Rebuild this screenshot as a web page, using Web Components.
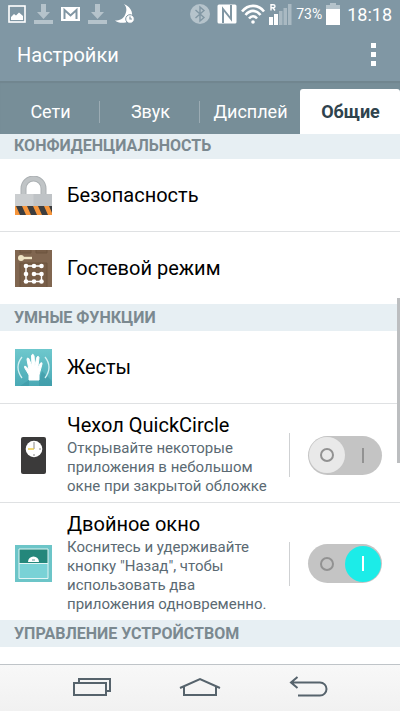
<!DOCTYPE html>
<html lang="ru">
<head>
<meta charset="utf-8">
<meta name="viewport" content="width=device-width, initial-scale=1">
<title>Настройки</title>
<style>
html, body { margin: 0; }
body { font-family: Roboto, "Noto Sans", sans-serif; color: #000; background: #fff; }
</style>
</head>
<body>
<settings-app></settings-app>

<template id="t-status">
<style>
:host { display: flex; align-items: center; justify-content: space-between; height: 28px; padding: 0 8px; color: #fff; }
div { display: flex; align-items: center; gap: 8px; }
.right { gap: 4px; }
svg { display: block; flex: none; }
.pct { font-size: 14px; }
.time { font-size: 18px; margin-left: 3px; }
.bt { margin-right: 3px; }
</style>
<div>
  <svg width="18" height="20" viewBox="0 0 18 20"><rect x="1" y="2" width="16" height="16" fill="none" stroke="#fff" stroke-width="1.6"/><path d="M3 16V13L6 10L8 11.500L11 8.500L15 12V16Z" fill="#fff"/></svg>
  <svg width="19" height="20" viewBox="0 0 19 20" fill="#b5c3cb"><path d="M7 0h5v8h4l-6.500 7L3 8h4zM0 16h19v4H0z"/></svg>
  <svg width="19" height="20" viewBox="0 0 19 20"><rect x="0" y="3" width="19" height="14" fill="#fff"/><path d="M3.500 15V6L9.500 11.500L15.500 6V15" fill="none" stroke="#8096a3" stroke-width="2"/></svg>
  <svg width="19" height="20" viewBox="0 0 19 20" fill="#b5c3cb"><path d="M7 0h5v8h4l-6.500 7L3 8h4zM0 16h19v4H0z"/></svg>
  <svg width="20" height="20" viewBox="0 0 20 20"><path d="M9 0C17 3 20 12 14 17C9 20 3 19 0 16.500C5 16.500 8 15 10 11C12 7 12 3 9 0Z" fill="#fff"/><circle cx="15" cy="15" r="4.300" fill="#fff" stroke="#8096a3"/><path d="M15 12.500V15H17" fill="none" stroke="#8096a3" stroke-width="1.200"/></svg>
</div>
<div class="right">
  <svg class="bt" width="20" height="20" viewBox="0 0 20 20"><circle cx="10" cy="10" r="10" fill="#b5c3cb"/><path d="M5.500 6L14 13.500L10 17V3L14 6.500L5.500 14" fill="none" stroke="#8096a3" stroke-width="1.400"/></svg>
  <svg width="20" height="20" viewBox="0 0 20 20"><rect x="0.500" y="0.500" width="19" height="19" rx="1.500" fill="#fff"/><path d="M6 19V5L14 15V1" fill="none" stroke="#8096a3" stroke-width="2"/></svg>
  <svg width="24" height="20" viewBox="0 0 24 20" fill="none" stroke="#fff" stroke-width="2.600"><path d="M1 7.500C7 0 17 0 23 7.500M4.500 11C9 5.500 15 5.500 19.500 11M8 14.500C10.500 11.500 13.500 11.500 16 14.500"/><circle cx="12" cy="18" r="1.800" fill="#fff" stroke="none"/></svg>
  <svg width="23" height="22" viewBox="0 0 23 22"><path d="M0 14h4v8H0zM5 11h4v11H5z" fill="#fff"/><path d="M10 8h3.500v14H10zM14.500 5H18v17h-3.500zM19 1h3.500v21H19z" fill="#a9b9c2"/><path d="M2 7.500V1.800H4.200Q6 1.800 6 3.300T4.200 4.800H2M4 4.800L6 7.500" fill="none" stroke="#fff" stroke-width="1.400"/></svg>
  <span class="pct">73%</span>
  <svg width="14" height="22" viewBox="0 0 14 22"><path d="M4 0h6v2h4v4H0V2h4z" fill="#b5c3cb"/><path d="M0 6h14v16H0z" fill="#fff"/></svg>
  <span class="time">18:18</span>
</div>
</template>

<template id="t-title">
<style>
:host { display: flex; align-items: center; justify-content: space-between; height: 53px; padding: 0 18px 0 17px; color: #fff; }
h1 { margin: 0; font-size: 20px; font-weight: 400; line-height: 24px; }
button { border: 0; padding: 5px; background: none; }
svg { display: block; }
</style>
<h1><slot></slot></h1>
<button aria-label="Меню"><svg width="6" height="24" viewBox="0 0 6 24" fill="#fff"><path d="M0 0h5v5H0zM0 9h5v5H0zM0 18h5v5H0z"/></svg></button>
</template>

<template id="t-tabs">
<style>
:host { display: block; background: #778e98; box-shadow: inset 0 2px 1px #71868f; }
nav { display: grid; grid-template-columns: repeat(4, 1fr); height: 53px; }
button { display: flex; align-items: center; justify-content: center; border: 0; margin: 8px 0 0; padding: 0 0 0 1px; background: none; font: 400 18px/22px Roboto, sans-serif; color: #fff; border-radius: 3px 3px 0 0; }
button.line { background: linear-gradient(#9babb3, #9babb3) right center / 1px 22px no-repeat; }
button[aria-selected="true"] { background: #fff; color: #2f434d; font-weight: 700; }
</style>
<nav role="tablist">
  <button role="tab" class="line" aria-selected="false">Сети</button>
  <button role="tab" class="line" aria-selected="false">Звук</button>
  <button role="tab" aria-selected="false">Дисплей</button>
  <button role="tab" aria-selected="true">Общие</button>
</nav>
</template>

<template id="t-heading">
<style>
:host { display: block; background: #e7eff3; color: #7b8990; padding: 0 14px; }
h2 { margin: 0; font-size: 16px; line-height: 27px; font-weight: 700; }
</style>
<h2><slot></slot></h2>
</template>

<template id="t-link">
<style>
:host { display: block; }
:host([divided]) { border-bottom: 1px solid #dfe1e3; }
a { display: flex; align-items: center; gap: 15px; min-height: 72px; padding: 0 15px; color: #000; text-decoration: none; font-size: 20px; line-height: 24px; }
</style>
<a href="#"><slot name="icon"></slot><slot></slot></a>
</template>

<template id="t-switch">
<style>
:host { display: block; }
:host([divided]) { border-bottom: 1px solid #dfe1e3; }
label { display: flex; align-items: center; gap: 15px; padding: 10px 18px 6px 15px; }
.text { flex: 1; font-size: 15px; line-height: 19px; color: #5b6a73; }
.name { font-size: 20px; line-height: 22px; color: #000; margin-bottom: 3px; }
.control { border-left: 1px solid #cfd1d3; height: 44px; padding-left: 18px; display: flex; align-items: center; }
.track { display: grid; grid-template-columns: 1fr 1fr; width: 74px; height: 39px; box-sizing: border-box; padding: 0 1px; border-radius: 20px; background: #c4c4c4; align-items: center; justify-items: center; }
.track > * { grid-row: 1; }
input { appearance: none; margin: 0; width: 36px; height: 36px; border-radius: 50%; background: #e9e9e9; grid-column: 1; }
input:checked { grid-column: 2; background: #1cece8; }
.off { grid-column: 1; width: 10px; height: 10px; border: 2px solid #929292; border-radius: 50%; z-index: 1; }
.on { grid-column: 2; width: 2px; height: 15px; background: #929292; z-index: 1; }
input:checked ~ .on { background: #fff; }
</style>
<label>
  <slot name="icon"></slot>
  <div class="text"><div class="name"><slot name="name"></slot></div><slot></slot></div>
  <span class="control"><span class="track"><input type="checkbox" role="switch"><span class="off"></span><span class="on"></span></span></span>
</label>
</template>

<template id="t-nav">
<style>
:host { display: block; background: linear-gradient(#f8f8f8, #f1f1f1); border-top: 1px solid #bfc4c8; }
nav { display: flex; justify-content: center; gap: 66px; height: 46px; align-items: center; }
button { border: 0; padding: 0; background: none; }
svg { display: block; fill: none; stroke: #56636c; stroke-width: 2; }
</style>
<nav>
  <button aria-label="Недавние"><svg width="42" height="24" viewBox="0 0 42 24"><path d="M4 7h32v12H4zM9 7V3h31v12h-4"/></svg></button>
  <button aria-label="Домой"><svg width="44" height="24" viewBox="0 0 44 24"><path d="M2 12L22 3L42 12M6 10.500V19H38V10.500"/></svg></button>
  <button aria-label="Назад"><svg width="42" height="24" viewBox="0 0 42 24"><path d="M9.500 1L3 6.500L9.500 12M3 6.500H32A6.500 6.500 0 0 1 32 19.500H10"/></svg></button>
</nav>
</template>

<template id="t-app">
<style>
:host { display: flex; flex-direction: column; height: 100vh; }
.top { background: #8097a4; }
.body { position: relative; flex: 1; min-height: 0; overflow: hidden; }
main { margin-top: -2px; }
.thumb { position: absolute; right: 0; top: 31%; height: 31%; width: 3px; background: #bcbec0; }
svg { display: block; flex: none; }
</style>
<div class="top">
  <status-bar></status-bar>
  <title-bar>Настройки</title-bar>
  <tab-strip></tab-strip>
</div>
<div class="body">
  <main>
    <section-heading>КОНФИДЕНЦИАЛЬНОСТЬ</section-heading>
    <link-row divided>
      <svg slot="icon" width="37" height="39" viewBox="0 0 37 39"><path d="M8.500 19V12.500a10 10 0 0 1 20 0V19" fill="none" stroke="#abb0b3" stroke-width="6"/><path d="M8.500 19V12.500a10 10 0 0 1 20 0V19" fill="none" stroke="#c0c4c6" stroke-width="4"/><path d="M0 18h37v12H0z" fill="#cbced0"/><path d="M18.500 18H37v12H18.500z" fill="#bfc3c6"/><path d="M0 30h37v9H0z" fill="#f6953b"/><path d="M1 30h6l4 9H5zM12 30h6l4 9h-6zM23 30h6l4 9h-6zM34 30h3v7z" fill="#3c3d3f"/></svg>
      Безопасность
    </link-row>
    <link-row>
      <svg slot="icon" width="37" height="37" viewBox="0 0 37 37"><path d="M0 0h37v37H0z" fill="#806650"/><path d="M5 0v3h11V0M21 0v3h11V0M5 37V13h27v24" fill="#775d47" stroke="#6d543f"/><path d="M6 8h11" stroke="#efe4c4" stroke-width="2.400"/><circle cx="6" cy="8" r="3" fill="#efe4c4"/><path d="M26.500 16H11v15.500h15.500V24H19" fill="none" stroke="#fff" stroke-width="1.400"/><g fill="#fff"><circle cx="11" cy="16" r="2.300"/><circle cx="19" cy="16" r="2.300"/><circle cx="26.500" cy="16" r="2.300"/><circle cx="11" cy="24" r="2.300"/><circle cx="19" cy="24" r="2.300"/><circle cx="26.500" cy="24" r="2.300"/><circle cx="11" cy="31.500" r="2.300"/><circle cx="19" cy="31.500" r="2.300"/><circle cx="26.500" cy="31.500" r="2.300"/></g></svg>
      Гостевой режим
    </link-row>
    <section-heading>УМНЫЕ ФУНКЦИИ</section-heading>
    <link-row divided>
      <svg slot="icon" width="37" height="37" viewBox="0 0 37 37"><defs><linearGradient id="sky" x2="0" y2="1"><stop stop-color="#6ec8cd"/><stop offset="1" stop-color="#4aa9b5"/></linearGradient></defs><path d="M0 0h37v37H0z" fill="url(#sky)"/><path d="M14 31L5 37H24V31L27 22L37 32V37H14Z" fill="#3c97a5" opacity=".6"/><path d="M7 8Q-1 18 7 29M30 8Q38 18 30 29" fill="none" stroke="#d4f0f2" stroke-width="1.300"/><path d="M14 31V26L9.500 18.500Q9 16.500 11 17.500L14 21L12 10.500Q12 8 13.800 9.500L17 17L16.500 6.500Q17.500 4 19 6.500L19.800 17L22 8Q23.500 6.500 24 8.500L22.800 19L25.500 14Q27.500 13 27 15L24 26V31Z" fill="#fff" stroke="#fff" stroke-linejoin="round"/></svg>
      Жесты
    </link-row>
    <switch-row divided>
      <svg slot="icon" width="37" height="37" viewBox="0 0 37 37"><rect x="6" width="25" height="37" rx="2" fill="#3b3a3a"/><circle cx="19" cy="12" r="8.300" fill="#fff"/><path d="M19 5v2M19 17v2M26 12h-2M19 7v5" stroke="#888"/><path d="M19 12h-6" stroke="#e8c840" stroke-width="1.400"/></svg>
      <span slot="name">Чехол QuickCircle</span>
      Открывайте некоторые приложения в небольшом окне при закрытой обложке
    </switch-row>
    <switch-row checked>
      <svg slot="icon" width="37" height="37" viewBox="0 0 37 37"><path d="M0 0h37v37H0z" fill="#6cc5c8"/><path d="M4 4h29v14H4z" fill="#24877b"/><path d="M4 19h29v14H4z" fill="#79d2d6"/><path d="M4 4h29v29.500H4zM4 18.500h29" fill="none" stroke="#e2f5f5"/><path d="M13 17a5.500 5.500 0 0 1 11 0z" fill="#fff"/><path d="M17 15h3" stroke="#9bb" stroke-width="1.500"/></svg>
      <span slot="name">Двойное окно</span>
      Коснитесь и удерживайте кнопку "Назад", чтобы использовать два приложения одновременно.
    </switch-row>
    <section-heading>УПРАВЛЕНИЕ УСТРОЙСТВОМ</section-heading>
  </main>
  <div class="thumb"></div>
</div>
<system-nav></system-nav>
</template>

<script>
class Base extends HTMLElement {
  constructor() {
    super();
    this.attachShadow({ mode: 'open' })
      .append(document.getElementById(this.constructor.template).content.cloneNode(true));
  }
}
customElements.define('status-bar', class extends Base { static template = 't-status'; });
customElements.define('title-bar', class extends Base { static template = 't-title'; });
customElements.define('tab-strip', class extends Base {
  static template = 't-tabs';
  connectedCallback() {
    const tabs = this.shadowRoot.querySelectorAll('button');
    tabs.forEach(tab => tab.addEventListener('click', () =>
      tabs.forEach(t => t.setAttribute('aria-selected', String(t === tab)))));
  }
});
customElements.define('section-heading', class extends Base { static template = 't-heading'; });
customElements.define('link-row', class extends Base { static template = 't-link'; });
customElements.define('switch-row', class extends Base {
  static template = 't-switch';
  connectedCallback() {
    this.shadowRoot.querySelector('input').checked = this.hasAttribute('checked');
  }
});
customElements.define('system-nav', class extends Base { static template = 't-nav'; });
customElements.define('settings-app', class extends Base { static template = 't-app'; });
</script>
</body>
</html>
